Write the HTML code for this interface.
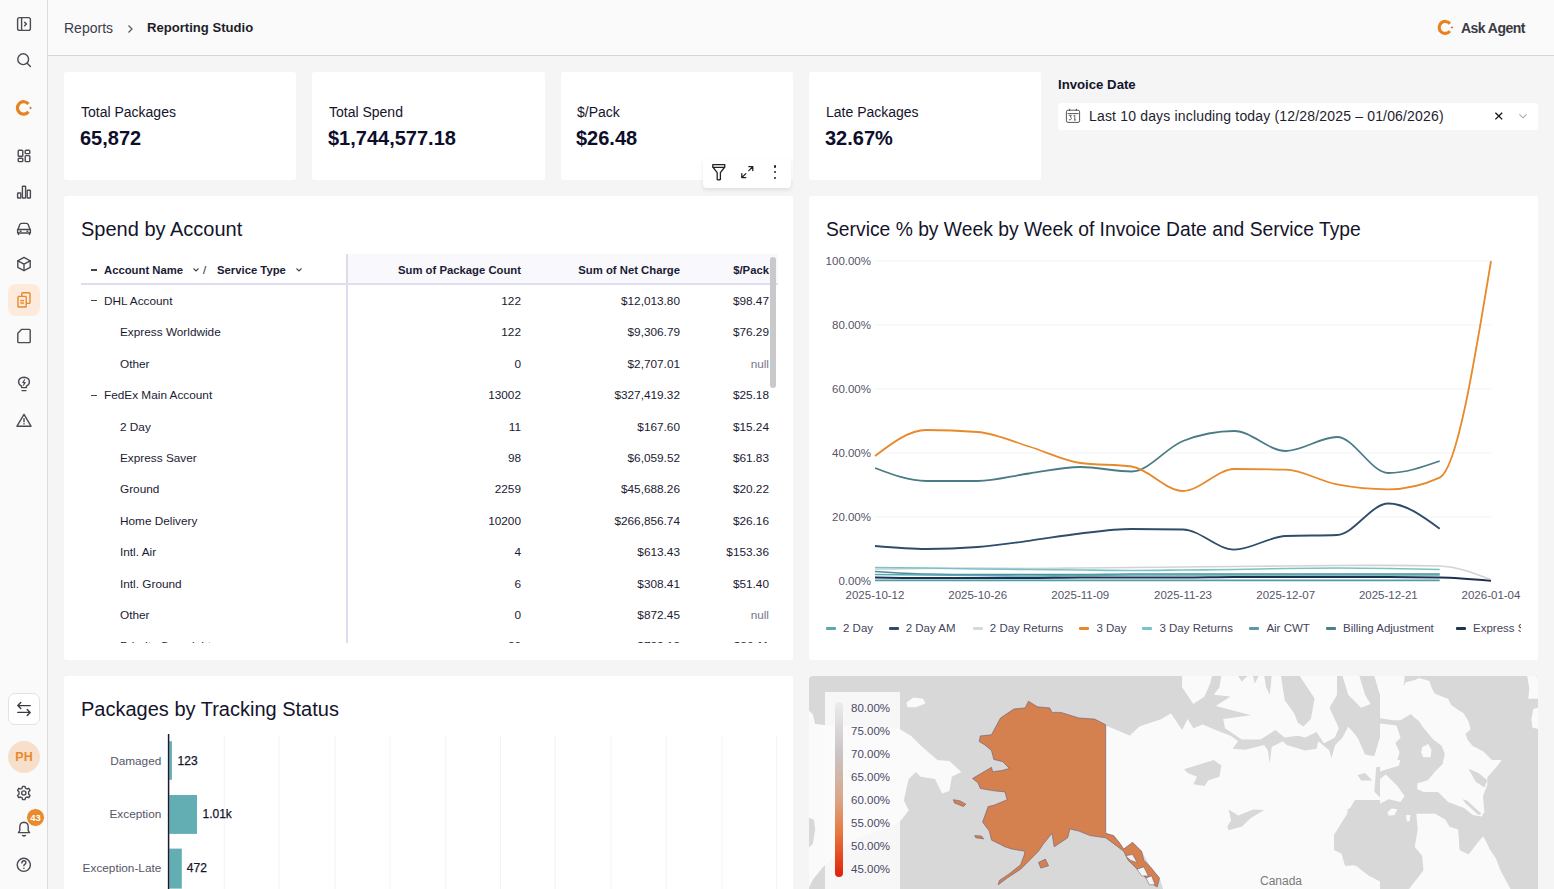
<!DOCTYPE html>
<html><head><meta charset="utf-8">
<style>
*{box-sizing:border-box;margin:0;padding:0}
html,body{width:1554px;height:889px;overflow:hidden;background:#f5f5f5;font-family:"Liberation Sans",sans-serif;color:#14142b}
.abs{position:absolute}
#side{position:absolute;left:0;top:0;width:48px;height:889px;background:#fafafa;border-right:1px solid #dcdcdc}
#hdr{position:absolute;left:48px;top:0;width:1506px;height:56px;background:#fafafa;border-bottom:1px solid #d6d6d6}
.card{position:absolute;background:#fff;border-radius:3px}
.kl{position:absolute;font-size:14px;color:#14142b;white-space:nowrap}
.kv{position:absolute;font-size:20px;font-weight:bold;color:#0e0e2c;white-space:nowrap}
.t20{position:absolute;font-size:20px;color:#14142b;white-space:nowrap}
.tx{position:absolute;white-space:nowrap}
.r{text-align:right}
svg{position:absolute;overflow:visible}
.tr{position:absolute;font-size:11.8px;line-height:16px;color:#1b1b33;white-space:nowrap}
.th{position:absolute;font-size:11.3px;line-height:16px;font-weight:bold;color:#1b1b33;white-space:nowrap}
.nul{color:#77778a}
.bl{position:absolute;font-size:11.8px;line-height:16px;color:#55556a;white-space:nowrap}
.bv{position:absolute;font-size:12px;line-height:16px;color:#14142b;white-space:nowrap;-webkit-text-stroke:0.25px #14142b}
.ml{position:absolute;font-size:11.5px;line-height:16px;color:#4a4a66;white-space:nowrap}

.ax{position:absolute;font-size:11.5px;line-height:16px;color:#55556a;white-space:nowrap}
.lg{position:absolute;font-size:11.5px;line-height:16px;color:#44445a;white-space:nowrap}

.mn{position:absolute;width:6px;height:1.3px;background:#444}

</style></head><body>
<div id="side"></div>
<div id="hdr"></div>
<!-- sidebar icons -->
<svg style="left:0;top:0" width="48" height="889" viewBox="0 0 48 889" fill="none" stroke="#4a4a52" stroke-width="1.4" stroke-linecap="round" stroke-linejoin="round">
 <!-- panel toggle -->
 <rect x="17.6" y="17.6" width="12.8" height="12.8" rx="2"/>
 <line x1="21.6" y1="17.6" x2="21.6" y2="30.4"/>
 <path d="M24.6 22.2 L26.4 24 L24.6 25.8"/>
 <!-- search -->
 <circle cx="23.2" cy="59.2" r="5.4"/>
 <line x1="27.2" y1="63.2" x2="30.4" y2="66.4"/>
 <!-- grid -->
 <rect x="18.2" y="150.2" width="4.6" height="6" rx="0.8"/>
 <rect x="25.2" y="150.2" width="4.6" height="3.4" rx="0.8"/>
 <rect x="18.2" y="158.2" width="4.6" height="3.4" rx="0.8"/>
 <rect x="25.2" y="155.6" width="4.6" height="6" rx="0.8"/>
 <!-- bar chart -->
 <rect x="17.6" y="193" width="3.2" height="5" rx="0.5"/>
 <rect x="22.4" y="186.2" width="3.2" height="11.8" rx="0.5"/>
 <rect x="27.2" y="190.2" width="3.2" height="7.8" rx="0.5"/>
 <!-- car -->
 <path d="M18 229.5 L19.8 224.6 Q20.2 223.4 21.4 223.4 L26.6 223.4 Q27.8 223.4 28.2 224.6 L30 229.5"/>
 <path d="M17.6 229.5 L30.4 229.5 L30.4 233 L17.6 233 Z"/>
 <line x1="18.6" y1="233" x2="18.6" y2="234.6"/>
 <line x1="29.4" y1="233" x2="29.4" y2="234.6"/>
 <line x1="20.2" y1="231.3" x2="21" y2="231.3"/>
 <line x1="27" y1="231.3" x2="27.8" y2="231.3"/>
 <!-- cube -->
 <path d="M24 257.4 L30.2 260.8 L30.2 267.4 L24 270.6 L17.8 267.4 L17.8 260.8 Z"/>
 <path d="M17.8 260.8 L24 264.2 L30.2 260.8 M24 264.2 L24 270.6"/>
 <!-- page -->
 <path d="M21.5 329.4 L29.4 329.4 Q30.2 329.4 30.2 330.2 L30.2 341.8 Q30.2 342.6 29.4 342.6 L18.6 342.6 Q17.8 342.6 17.8 341.8 L17.8 333.2 Z"/>
 <!-- bulb -->
 <path d="M21.6 387.6 L21.6 386.2 Q18.4 384.4 18.6 381.6 Q18.8 377.4 24 377.2 Q29.2 377.4 29.4 381.6 Q29.6 384.4 26.4 386.2 L26.4 387.6 Z"/>
 <line x1="22" y1="390.6" x2="26" y2="390.6"/>
 <path d="M24.6 379.8 L22.8 382.6 L25.2 382.6 L23.4 385.2" stroke-width="1.1"/>
 <!-- warning -->
 <path d="M24 414.4 L31 426.2 L17 426.2 Z"/>
 <line x1="24" y1="418.8" x2="24" y2="421.8"/>
 <line x1="24" y1="423.8" x2="24" y2="424"/>
 <!-- gear -->
 <circle cx="23.8" cy="793" r="2.1"/>
 <path d="M22.6 786.4 L25 786.4 L25.5 788.2 L27 789 L28.8 788.3 L30 790.4 L28.6 791.7 L28.6 794.3 L30 795.6 L28.8 797.7 L27 797 L25.5 797.8 L25 799.6 L22.6 799.6 L22.1 797.8 L20.6 797 L18.8 797.7 L17.6 795.6 L19 794.3 L19 791.7 L17.6 790.4 L18.8 788.3 L20.6 789 L22.1 788.2 Z"/>
 <!-- bell -->
 <path d="M18.4 832.6 L19.8 830.6 L19.8 827 Q19.8 822.4 24 822.2 Q28.2 822.4 28.2 827 L28.2 830.6 L29.6 832.6 Z"/>
 <path d="M22.6 835.4 Q24 836.6 25.4 835.4"/>
 <!-- help -->
 <circle cx="23.8" cy="864.8" r="6.6"/>
 <path d="M21.9 863 Q21.9 860.7 23.9 860.7 Q25.9 860.7 25.9 862.6 Q25.9 863.8 24.7 864.4 Q23.9 864.8 23.9 865.8"/>
 <line x1="23.9" y1="868.2" x2="23.9" y2="868.4"/>
</svg>
<!-- C logo -->
<svg style="left:1px;top:0" width="48" height="130" viewBox="0 0 48 130"><path d="M27.49 104.08 A6.2 6.2 0 1 0 27.49 111.72" fill="none" stroke="#e8821f" stroke-width="3.2"/><path d="M29.60 106.20 Q29.60 107.90 31.30 107.90 Q29.60 107.90 29.60 109.60 Q29.60 107.90 27.90 107.90 Q29.60 107.90 29.60 106.20 Z" fill="#b0652a"/></svg>
<!-- active docs -->
<div style="position:absolute;left:8px;top:284px;width:32px;height:32px;border-radius:8px;background:#fcebdd"></div>
<svg style="left:0;top:0" width="48" height="889" viewBox="0 0 48 889" fill="none" stroke="#e8892b" stroke-width="1.4" stroke-linejoin="round">
 <rect x="21.8" y="292.8" width="8.2" height="10.6" rx="0.8"/>
 <rect x="18" y="296.4" width="8.2" height="10.6" rx="0.8" fill="#fcebdd"/>
 <line x1="20.2" y1="300.6" x2="24" y2="300.6"/>
 <line x1="20.2" y1="303" x2="24" y2="303"/>
</svg>
<!-- swap button -->
<div style="position:absolute;left:8px;top:693px;width:32px;height:32px;border-radius:7px;background:#fff;border:1px solid #e2e2e2"></div>
<svg style="left:0;top:0" width="48" height="889" viewBox="0 0 48 889" fill="none" stroke="#3a3a44" stroke-width="1.4" stroke-linecap="round" stroke-linejoin="round">
 <path d="M30.2 705.6 L17.8 705.6 M20.8 702.6 L17.8 705.6 L20.8 708.6"/>
 <path d="M17.8 712.4 L30.2 712.4 M27.2 709.4 L30.2 712.4 L27.2 715.4"/>
</svg>
<!-- avatar -->
<div style="position:absolute;left:8px;top:741px;width:32px;height:32px;border-radius:50%;background:#f8dfcc;color:#e8892b;font-size:12.5px;font-weight:bold;line-height:32px;text-align:center">PH</div>
<!-- badge -->
<div style="position:absolute;left:27.5px;top:809px;width:17px;height:17px;border-radius:50%;background:#ea8a2a;color:#fff;font-size:9.5px;font-weight:bold;line-height:17px;text-align:center;border:1.5px solid #fafafa;box-sizing:content-box;margin:-1.5px 0 0 -1.5px">43</div>


<!-- breadcrumb -->
<div class="tx" style="left:64px;top:20px;font-size:14px;color:#3c3c4a">Reports</div>
<svg style="left:126px;top:24px" width="8" height="10" viewBox="0 0 8 10"><path d="M2.5 1.5 L6 5 L2.5 8.5" fill="none" stroke="#555" stroke-width="1.2"/></svg>
<div class="tx" style="left:147px;top:20px;font-size:13.1px;font-weight:bold;color:#1f1f2a">Reporting Studio</div>

<!-- Ask agent -->
<div class="tx" style="left:1461px;top:20px;font-size:14px;letter-spacing:-0.55px;font-weight:bold;color:#3a3a44">Ask Agent</div>

<!-- KPI cards -->
<div class="card" style="left:64px;top:72px;width:232px;height:108px"></div>
<div class="card" style="left:312px;top:72px;width:233px;height:108px"></div>
<div class="card" style="left:561px;top:72px;width:232px;height:108px"></div>
<div class="card" style="left:809px;top:72px;width:232px;height:108px"></div>
<div class="kl" style="left:81px;top:104px">Total Packages</div>
<div class="kv" style="left:80px;top:127px">65,872</div>
<div class="kl" style="left:329px;top:104px">Total Spend</div>
<div class="kv" style="left:328px;top:127px">$1,744,577.18</div>
<div class="kl" style="left:577px;top:104px">$/Pack</div>
<div class="kv" style="left:576px;top:127px">$26.48</div>
<div class="kl" style="left:826px;top:104px">Late Packages</div>
<div class="kv" style="left:825px;top:127px">32.67%</div>

<!-- Invoice date filter -->
<div class="tx" style="left:1058px;top:77px;font-size:13.2px;font-weight:bold;color:#14142b">Invoice Date</div>
<div class="card" style="left:1058px;top:103px;width:480px;height:27px;border-radius:3px"></div>
<div class="tx" style="left:1089px;top:108px;font-size:14px;letter-spacing:0.17px;color:#1e1e2e">Last 10 days including today (12/28/2025 – 01/06/2026)</div>

<!-- ask agent icon -->
<svg style="left:0;top:0" width="1554" height="60" viewBox="0 0 1554 60"><path d="M1449.93 23.71 A6.0 6.0 0 1 0 1449.93 31.09" fill="none" stroke="#e8821f" stroke-width="3.1"/><path d="M1452.00 25.80 Q1452.00 27.40 1453.60 27.40 Q1452.00 27.40 1452.00 29.00 Q1452.00 27.40 1450.40 27.40 Q1452.00 27.40 1452.00 25.80 Z" fill="#b0652a"/></svg>
<!-- calendar icon -->
<svg style="left:0;top:0" width="1554" height="889" viewBox="0 0 1554 889" fill="none" stroke="#555" stroke-width="1">
 <rect x="1066.4" y="110.2" width="13.2" height="12.2" rx="1.6"/>
 <line x1="1067.6" y1="113.6" x2="1078.6" y2="113.6"/>
 <line x1="1069.6" y1="108.8" x2="1069.6" y2="111"/>
 <line x1="1076.4" y1="108.8" x2="1076.4" y2="111"/>
 <path d="M1068.8 115.4 L1071.4 115.4 L1070.2 117 Q1071.6 117.2 1071.4 118.6 Q1071 120.2 1068.8 119.8" stroke-width="0.9"/>
 <path d="M1073.4 115.8 L1074.8 115.2 L1074.8 120 M1073.8 120 L1076 120" stroke-width="0.9"/>
 <!-- x -->
 <path d="M1495.4 112.8 L1502.2 119.4 M1502.2 112.8 L1495.4 119.4" stroke="#111" stroke-width="1.3"/>
 <!-- chevron -->
 <path d="M1519.4 114.4 L1523 117.8 L1526.6 114.4" stroke="#a8a8b0" stroke-width="1.1"/>
</svg>
<!-- toolbar -->
<div style="position:absolute;left:703px;top:158.5px;width:88px;height:29.5px;background:#fff;border-radius:4px;box-shadow:0 2px 4px rgba(0,0,0,0.09)"></div>
<svg style="left:0;top:0" width="1554" height="889" viewBox="0 0 1554 889" fill="none" stroke="#222" stroke-width="1.3" stroke-linejoin="round" stroke-linecap="round">
 <path d="M712.8 164.6 L724.8 164.6 L724.8 167 L720.4 172.6 L720.4 179.4 Q718.8 180.4 717.2 179.4 L717.2 172.6 L712.8 167 Z"/>
 <line x1="713.2" y1="167.4" x2="724.4" y2="167.4"/>
 <path d="M741.8 177.6 L745.8 173.6 M748.8 170.6 L752.8 166.6 M748.8 166.6 L752.8 166.6 L752.8 170.6 M741.8 173.6 L741.8 177.6 L745.8 177.6"/>
</svg>
<div style="position:absolute;left:773.6px;top:165.4px;width:2.4px;height:2.4px;border-radius:50%;background:#222"></div>
<div style="position:absolute;left:773.6px;top:171px;width:2.4px;height:2.4px;border-radius:50%;background:#222"></div>
<div style="position:absolute;left:773.6px;top:176.6px;width:2.4px;height:2.4px;border-radius:50%;background:#222"></div>

<!-- panels -->
<div class="card" style="left:64px;top:196px;width:729px;height:464px"></div>
<div class="card" style="left:809px;top:196px;width:729px;height:464px"></div>
<div class="card" style="left:64px;top:676px;width:729px;height:240px"></div>
<div style="position:absolute;left:809px;top:676px;width:729px;height:213px;overflow:hidden;border-radius:4px 4px 0 0"><svg style="left:-809px;top:-676px" width="1554" height="889" viewBox="0 0 1554 889">
<rect x="809" y="676" width="729" height="213" fill="#d8d8d8"/>
<polygon points="808.0,709.6 812.8,714.4 815.2,723.9 824.8,725.1 855.9,726.3 879.9,727.5 899.1,728.7 911.1,735.9 920.7,745.5 937.4,759.9 949.4,761.1 961.4,771.9 951.8,776.7 949.4,791.1 942.2,793.4 935.0,779.1 920.7,776.7 915.9,771.9 908.7,779.1 906.3,788.7 903.9,800.6 908.7,810.2 901.5,819.8 887.1,829.4 875.1,831.8 855.9,839.0 844.0,848.6 832.0,858.2 822.4,867.8 812.8,879.7 808.0,889.1 805.6,889.1 805.6,709.6" fill="#fafafa"/>
<polygon points="906.3,702.4 913.5,697.6 923.1,698.8 925.4,703.6 915.9,707.2 907.5,707.2" fill="#fafafa"/>
<polygon points="808.0,817.4 814.0,819.8 815.2,829.4 812.8,843.8 808.0,848.6" fill="#d8d8d8"/>
<polygon points="1105.7,833.3 1105.7,724.7 1116.9,729.2 1130.4,732.6 1137.1,729.2 1146.0,728.1 1159.5,719.1 1170.0,712.4 1160.0,722.2 1169.0,713.2 1175.4,723.4 1183.1,729.8 1186.9,718.3 1187.6,728.6 1193.3,726.0 1201.0,724.7 1213.8,729.8 1220.3,733.7 1231.8,736.3 1239.5,738.8 1233.1,747.8 1236.9,751.6 1247.2,751.6 1260.0,749.1 1265.1,751.6 1269.0,764.5 1270.3,755.5 1269.0,747.8 1275.4,738.8 1283.1,736.3 1288.2,746.5 1301.0,751.6 1313.8,750.4 1316.4,747.8 1324.1,742.7 1329.2,758.1 1331.8,747.8 1339.5,738.8 1350.0,727.3 1350,700 1545,700 1545,900 1164.0,891.6 1159.5,878.1 1150.5,866.9 1141.6,851.3 1132.6,842.3 1123.7,849.0 1119.2,842.3 1113.6,835.6" fill="#fafafa"/>
<polygon points="1181.2,688.2 1183.1,682.4 1186.9,676.0 1220.3,676.0 1216.4,677.3 1209.4,686.3 1207.4,696.5 1201.0,698.4 1194.0,703.6 1185.6,692.7" fill="#fafafa"/>
<polygon points="1215.1,691.4 1216.4,682.4 1220.3,676.0 1236.9,676.0 1238.2,679.8 1242.1,679.8 1243.3,676.0 1252.3,676.0 1254.9,683.7 1258.7,682.4 1260.0,676.0 1265.1,676.0 1269.0,693.9 1271.5,693.9 1271.5,676.0 1281.8,676.0 1283.1,695.2 1285.6,704.2 1293.3,711.9 1301.0,715.7 1303.6,720.9 1295.9,735.0 1283.1,735.0 1275.4,728.6 1269.0,735.0 1252.3,740.1 1242.1,740.1 1239.5,732.4 1229.2,729.8 1224.1,723.4 1226.7,718.3 1249.7,714.5 1236.9,710.0 1218.3,708.1 1219.0,703.6 1230.5,697.8 1220.3,697.2" fill="#fafafa"/>
<polygon points="1294.6,676.0 1301.0,683.7 1311.3,692.7 1313.8,699.1 1324.1,699.1 1325.4,676.0" fill="#fafafa"/>
<polygon points="1311.3,733.7 1319.0,723.4 1327.9,727.3 1326.7,740.1 1321.5,745.2 1316.4,742.7" fill="#fafafa"/>
<polygon points="1330.5,676.0 1339.5,676.0 1336.9,692.7 1344.6,701.6 1345.9,714.5 1350.0,717.0 1350.0,727.3 1339.5,727.3 1329.2,726.0 1326.7,719.6 1325.4,701.6 1330.5,695.2" fill="#fafafa"/>
<polygon points="1346.2,676.0 1359.0,676.0 1359.0,699.1 1361.5,706.8 1364.1,711.9 1375.6,717.0 1383.3,719.6 1380.8,733.7 1375.6,747.8 1370.5,758.1 1366.7,747.8 1364.1,733.7 1357.7,729.8 1355.1,742.7 1352.6,727.3 1346.2,726.0" fill="#d8d8d8"/>
<polygon points="1430.8,682.4 1434.6,692.7 1439.7,696.5 1448.7,699.1 1451.3,705.5 1461.5,711.9 1465.4,719.6 1470.5,729.8 1465.4,737.5 1470.5,741.4 1478.2,747.8 1485.9,752.9 1491.0,760.6 1498.7,765.7 1487.2,785.0 1491.0,790.0 1567.9,790.0 1567.9,669.6 1426.9,669.6" fill="#d8d8d8"/>
<polygon points="1359.0,676.0 1374.4,676.0 1379.5,697.8 1382.1,676.0 1403.8,676.0 1403.8,688.8 1415.4,679.8 1420.5,678.6 1430.8,682.4 1434.6,692.7 1439.7,696.5 1448.7,699.1 1451.3,705.5 1461.5,711.9 1465.4,719.6 1470.5,729.8 1465.4,737.5 1470.5,741.4 1478.2,747.8 1485.9,752.9 1491.0,760.6 1498.7,765.7 1487.2,785.0 1478.2,779.8 1465.4,767.0 1447.4,758.1 1442.3,742.7 1432.1,736.3 1421.8,724.7 1417.9,717.0 1409.0,713.2 1392.3,722.2 1383.3,719.6 1375.6,717.0 1364.1,711.9 1361.5,706.8 1370.5,705.5 1366.7,701.6 1359.0,699.1" fill="#fafafa"/>
<polygon points="1534.6,676.0 1540.0,676.0 1540.0,691.4 1535.9,692.7 1533.3,683.7" fill="#fafafa"/>
<polygon points="1537.2,709.3 1540.0,708.1 1540.0,727.3 1535.9,724.7 1534.6,717.0" fill="#fafafa"/>
<polygon points="1392.3,724.7 1409.0,713.2 1417.9,717.0 1421.8,724.7 1432.1,736.3 1442.3,742.7 1444.9,758.1 1438.5,778.6 1421.8,782.4 1416.7,790.0 1387.2,790.0 1387.2,765.7 1398.7,758.1 1396.2,742.7" fill="#d8d8d8"/>
<polygon points="1421.2,747.8 1425.6,743.9 1430.8,746.5 1430.1,756.8 1424.4,758.1 1421.2,754.2" fill="#fafafa"/>
<polygon points="1450.0,759.3 1460.3,767.0 1456.4,773.4 1451.3,776.0" fill="#d8d8d8"/>
<polygon points="1465.4,773.4 1469.2,768.3 1478.2,773.4 1485.9,790.0 1471.8,790.0" fill="#d8d8d8"/>
<polygon points="1350.0,808.2 1353.7,802.1 1357.4,795.9 1367.2,795.9 1372.1,784.9 1375.7,780.0 1378.2,780.0 1380.6,804.5 1386.8,809.4 1405.1,810.6 1417.4,814.3 1417.4,829.0 1419.9,838.8 1415.0,848.6 1416.2,853.5 1423.5,863.3 1423.5,875.6 1408.8,888.9 1395.3,888.9 1380.6,881.7 1368.4,875.6 1356.1,865.8 1347.5,864.6 1347.5,809.4" fill="#d8d8d8"/>
<polygon points="1405.1,780.0 1416.2,780.0 1418.6,792.3 1435.8,791.0 1448.0,794.7 1460.3,798.4 1472.5,804.5 1479.9,816.8 1483.6,835.1 1478.7,845.0 1472.5,852.3 1466.4,853.5 1457.8,848.6 1457.8,829.0 1448.0,824.1 1438.2,814.3 1430.9,815.5 1417.4,814.3 1405.1,810.6" fill="#d8d8d8"/>
<polygon points="1487.3,767.7 1541.2,767.7 1541.2,888.9 1515.4,888.9 1498.3,865.8 1483.6,835.1 1487.3,780.0" fill="#d8d8d8"/>
<polygon points="1228.6,809.4 1238.4,815.5 1253.1,809.4 1264.2,810.0 1250.7,818.0 1242.1,826.6 1228.6,830.2 1227.4,826.6 1231.1,820.4" fill="#d8d8d8"/>
<polygon points="1350.0,809.4 1341.4,822.9 1334.0,835.1 1334.0,849.9 1341.4,853.5 1345.0,865.8 1351.2,865.8" fill="#d8d8d8"/>
<polygon points="1184.4,769.6 1210.0,760.6 1213.8,763.2 1198.5,770.9 1220.3,765.7 1221.5,776.0 1216.4,778.6 1211.3,778.6 1202.3,786.3 1193.3,782.4 1198.5,774.7 1185.6,773.4" fill="#d8d8d8"/>
<rect x="1105.6" y="676" width="274.4" height="124" fill="#fafafa"/>
<polygon points="1100.0,676.0 1182.1,676.0 1182.1,687.2 1193.3,704.0 1204.5,696.5 1210.1,683.5 1212.0,676.0 1221.3,676.0 1219.4,687.2 1213.8,694.7 1230.6,696.5 1215.7,705.9 1251.1,715.2 1223.2,718.9 1225.0,728.2 1241.8,739.4 1260.5,739.4 1275.4,730.1 1284.7,737.6 1297.8,735.7 1305.3,737.6 1316.5,732.0 1323.9,743.2 1335.1,737.6 1338.9,728.2 1331.4,758.1 1329.5,750.6 1318.3,741.3 1316.5,748.8 1305.3,750.6 1286.6,745.0 1282.9,741.3 1271.7,746.9 1269.8,763.7 1267.9,750.6 1264.2,745.0 1245.5,749.7 1232.5,748.8 1238.1,741.3 1230.6,735.7 1215.7,730.1 1202.6,724.5 1193.3,728.2 1187.7,718.9 1182.1,730.1 1170.9,713.3 1161.6,718.9 1139.2,726.4 1129.9,735.7 1116.8,730.1 1105.6,725.4 1100.0,720.8" fill="#d8d8d8"/>
<polygon points="1281.0,676.0 1299.7,676.0 1314.6,698.4 1310.9,718.9 1303.4,726.4 1297.8,722.7 1294.1,713.3 1284.7,700.3" fill="#d8d8d8"/>
<polygon points="1337.0,676.0 1342.6,676.0 1348.2,694.7 1361.2,707.7 1370.6,704.0 1365.0,694.7 1359.4,676.0 1374.3,676.0 1379.9,694.7 1390.0,720.8 1379.9,737.6 1374.3,756.2 1365.0,754.4 1357.5,737.6 1348.2,726.4 1342.6,737.6 1335.1,745.0 1331.4,758.1 1329.5,750.6 1338.9,728.2 1329.5,707.7 1337.0,694.7" fill="#d8d8d8"/>
<polygon points="1264.2,676.0 1271.7,676.0 1269.8,694.7 1266.1,687.2" fill="#d8d8d8"/>
<polygon points="1238.1,676.0 1247.4,676.0 1241.8,681.6" fill="#d8d8d8"/>
<polygon points="1253.0,676.0 1258.6,676.0 1254.9,683.5" fill="#d8d8d8"/>
<polygon points="1184.0,769.3 1213.8,760.0 1221.3,765.6 1219.4,776.8 1208.2,780.5 1204.5,786.1 1193.3,784.2 1197.0,776.8 1187.7,773.0" fill="#d8d8d8"/>
<polygon points="1357.5,774.9 1365.0,773.0 1372.4,780.5 1361.2,780.5" fill="#d8d8d8"/>
<polygon points="1376.2,767.4 1383.6,765.6 1390.0,773.0 1390.0,788.0 1379.9,797.3 1374.3,791.7" fill="#d8d8d8"/>
<rect x="1380" y="676" width="160" height="87" fill="#d8d8d8"/>
<polygon points="1380.0,676.0 1404.7,676.0 1403.7,686.3 1405.7,682.2 1415.0,680.1 1419.1,678.1 1429.4,681.1 1431.5,687.3 1434.6,693.5 1441.8,696.6 1448.0,698.7 1451.0,704.8 1458.2,710.0 1463.4,713.1 1468.5,721.3 1470.6,729.5 1465.5,733.7 1467.5,739.8 1472.7,746.0 1483.0,751.2 1489.1,757.3 1498.4,766.6 1441.8,766.6 1444.9,754.2 1441.8,746.0 1433.5,739.8 1428.4,733.7 1423.2,727.5 1419.1,721.3 1414.0,717.2 1410.9,714.1 1400.6,720.3 1393.4,720.3 1380.0,718.2" fill="#fafafa"/>
<polygon points="1380.0,723.4 1396.5,725.4 1400.6,737.8 1395.4,742.9 1399.6,752.2 1395.4,766.6 1380.0,766.6" fill="#fafafa"/>
<polygon points="1422.2,747.0 1428.4,744.0 1431.5,750.1 1430.5,757.3 1423.2,757.3 1421.2,752.2" fill="#fafafa"/>
<polygon points="1527.2,676.0 1540.0,676.0 1540.0,698.7 1528.3,698.7 1529.3,688.4" fill="#fafafa"/>
<polygon points="1533.4,708.9 1540.0,706.9 1540.0,729.5 1532.4,727.5 1531.4,719.2" fill="#fafafa"/>
<rect x="1380" y="763" width="160" height="130" fill="#d8d8d8"/>
<polygon points="1380.0,760.0 1400.3,760.0 1398.9,765.8 1388.7,768.7 1380.0,771.6" fill="#fafafa"/>
<polygon points="1380.0,778.9 1385.8,774.5 1397.4,786.1 1404.7,796.3 1400.3,802.1 1388.7,799.2 1380.0,803.5" fill="#fafafa"/>
<polygon points="1435.1,771.6 1446.7,760.0 1501.8,760.0 1497.5,765.8 1487.3,777.4 1487.3,784.7 1483.0,796.3 1484.4,812.2 1481.5,816.6 1472.8,815.1 1464.1,807.9 1448.2,802.1 1438.0,791.9 1423.5,791.9 1417.0,789.0 1417.7,783.2 1427.9,780.3" fill="#fafafa"/>
<polygon points="1416.3,813.7 1435.1,813.7 1445.3,819.5 1449.6,826.7 1458.3,829.6 1459.8,849.9 1468.5,854.3 1478.6,841.2 1483.0,835.4 1490.2,849.9 1496.0,858.6 1500.4,870.2 1510.5,889.0 1409.0,889.0 1423.5,870.2 1422.1,855.7 1414.8,847.0 1417.7,829.6" fill="#fafafa"/>
<polygon points="1387.3,812.2 1391.6,808.6 1397.4,809.3 1394.5,815.1 1388.7,815.8" fill="#fafafa"/>
<polygon points="1406.1,815.1 1410.5,815.1 1409.7,820.9 1406.8,821.6" fill="#fafafa"/>
<polygon points="1468.5,768.7 1478.6,773.1 1487.3,780.3 1484.4,787.6 1475.7,781.8" fill="#d8d8d8"/>
<polygon points="1462.7,799.2 1467.0,800.6 1481.5,813.7 1478.6,815.1 1465.6,803.5" fill="#d8d8d8"/>
<polygon points="1458.3,829.6 1467.0,823.8 1481.5,828.2 1484.4,835.4 1478.6,841.2 1468.5,854.3 1459.8,849.9" fill="#d8d8d8"/>
<polygon points="1028.5,701.2 1037.4,706.8 1049.7,707.9 1052.0,712.4 1060.9,712.4 1078.9,718.0 1094.5,719.1 1105.7,724.7 1105.7,833.3 1113.6,835.6 1119.2,842.3 1123.7,849.0 1132.6,842.3 1141.6,851.3 1143.8,860.2 1150.5,866.9 1159.5,878.1 1157.2,887.1 1150.5,882.6 1141.6,873.7 1134.8,866.9 1128.1,860.2 1123.7,851.3 1114.7,844.5 1105.7,837.8 1090.1,835.6 1078.9,831.1 1069.9,828.9 1067.7,837.8 1054.2,846.8 1052.0,833.3 1043.0,844.5 1038.5,851.3 1029.6,860.2 1020.6,869.2 1007.2,878.1 998.2,884.8 999.4,880.4 1009.4,873.7 1020.6,864.7 1024.0,855.7 1025.1,851.3 1011.7,849.0 1004.9,846.8 1000.5,844.5 991.5,840.1 989.3,831.1 982.6,822.1 988.2,806.5 993.8,805.3 1007.2,799.7 1004.9,791.9 993.8,790.8 980.3,788.5 978.1,782.9 972.5,778.5 991.5,767.3 992.6,771.7 1001.6,770.6 1009.4,768.4 1002.7,761.7 993.8,759.4 991.5,750.5 984.8,744.9 979.2,741.5 980.3,735.9 991.5,734.8 1000.5,718.0 1013.9,709.0 1025.1,707.9" fill="#d4804f" stroke="#6a5a78" stroke-width="0.6"/>
<polygon points="953.4,799.7 960.2,800.9 965.8,804.2 963.5,806.5 954.6,803.1" fill="#d4804f" stroke="#6a5a78" stroke-width="0.6"/>
<polygon points="974.7,835.6 981.4,836.0 983.7,838.9 975.8,837.8" fill="#d4804f" stroke="#6a5a78" stroke-width="0.6"/>
<polygon points="1038.5,862.5 1045.3,859.1 1048.6,865.8 1040.8,868.1" fill="#d4804f" stroke="#6a5a78" stroke-width="0.6"/>
<polygon points="1125.9,855.7 1132.6,854.6 1137.1,862.5 1130.4,860.2" fill="#f4f4f4" stroke="#6a5a78" stroke-width="0.5"/>
<polygon points="1137.1,869.2 1143.8,866.9 1148.3,875.9 1141.6,875.9" fill="#f4f4f4" stroke="#6a5a78" stroke-width="0.5"/>
<polygon points="1146.0,878.1 1151.6,875.9 1155.0,884.8 1149.4,884.8" fill="#f4f4f4" stroke="#6a5a78" stroke-width="0.5"/>
</svg></div>

<div class="t20" style="left:81px;top:218px">Spend by Account</div>
<div id="tbl" style="position:absolute;left:64px;top:254px;width:729px;height:389px;overflow:hidden">
<div style="position:absolute;left:284px;top:0;width:430px;height:30px;background:#f9f9fd"></div>
<div style="position:absolute;left:17px;top:29px;width:697px;height:2px;background:#dedef0"></div>
<div style="position:absolute;left:282px;top:0;width:2px;height:400px;background:#dcdcec"></div>
<div class="mn" style="left:27px;top:15.4px"></div>
<div class="th" style="left:40px;top:8px">Account Name</div>
<svg style="left:128px;top:13px" width="8" height="6" viewBox="0 0 8 6"><path d="M1.5 1.5 L4 4 L6.5 1.5" fill="none" stroke="#444" stroke-width="1.1"/></svg>
<div class="th" style="left:139px;top:8px;font-weight:normal">/</div>
<div class="th" style="left:153px;top:8px">Service Type</div>
<svg style="left:231px;top:13px" width="8" height="6" viewBox="0 0 8 6"><path d="M1.5 1.5 L4 4 L6.5 1.5" fill="none" stroke="#444" stroke-width="1.1"/></svg>
<div class="th r" style="right:272px;top:8px">Sum of Package Count</div>
<div class="th r" style="right:113px;top:8px">Sum of Net Charge</div>
<div class="th r" style="right:24px;top:8px">$/Pack</div>
<div class="mn" style="left:27px;top:46.2px"></div><div class="tr" style="left:40px;top:38.8px">DHL Account</div><div class="tr r" style="right:272px;top:38.8px">122</div><div class="tr r" style="right:113px;top:38.8px">$12,013.80</div><div class="tr r" style="right:24px;top:38.8px">$98.47</div>
<div class="tr" style="left:56px;top:70.2px">Express Worldwide</div><div class="tr r" style="right:272px;top:70.2px">122</div><div class="tr r" style="right:113px;top:70.2px">$9,306.79</div><div class="tr r" style="right:24px;top:70.2px">$76.29</div>
<div class="tr" style="left:56px;top:101.6px">Other</div><div class="tr r" style="right:272px;top:101.6px">0</div><div class="tr r" style="right:113px;top:101.6px">$2,707.01</div><div class="tr r nul" style="right:24px;top:101.6px">null</div>
<div class="mn" style="left:27px;top:140.5px"></div><div class="tr" style="left:40px;top:133.1px">FedEx Main Account</div><div class="tr r" style="right:272px;top:133.1px">13002</div><div class="tr r" style="right:113px;top:133.1px">$327,419.32</div><div class="tr r" style="right:24px;top:133.1px">$25.18</div>
<div class="tr" style="left:56px;top:164.5px">2 Day</div><div class="tr r" style="right:272px;top:164.5px">11</div><div class="tr r" style="right:113px;top:164.5px">$167.60</div><div class="tr r" style="right:24px;top:164.5px">$15.24</div>
<div class="tr" style="left:56px;top:195.9px">Express Saver</div><div class="tr r" style="right:272px;top:195.9px">98</div><div class="tr r" style="right:113px;top:195.9px">$6,059.52</div><div class="tr r" style="right:24px;top:195.9px">$61.83</div>
<div class="tr" style="left:56px;top:227.3px">Ground</div><div class="tr r" style="right:272px;top:227.3px">2259</div><div class="tr r" style="right:113px;top:227.3px">$45,688.26</div><div class="tr r" style="right:24px;top:227.3px">$20.22</div>
<div class="tr" style="left:56px;top:258.7px">Home Delivery</div><div class="tr r" style="right:272px;top:258.7px">10200</div><div class="tr r" style="right:113px;top:258.7px">$266,856.74</div><div class="tr r" style="right:24px;top:258.7px">$26.16</div>
<div class="tr" style="left:56px;top:290.2px">Intl. Air</div><div class="tr r" style="right:272px;top:290.2px">4</div><div class="tr r" style="right:113px;top:290.2px">$613.43</div><div class="tr r" style="right:24px;top:290.2px">$153.36</div>
<div class="tr" style="left:56px;top:321.6px">Intl. Ground</div><div class="tr r" style="right:272px;top:321.6px">6</div><div class="tr r" style="right:113px;top:321.6px">$308.41</div><div class="tr r" style="right:24px;top:321.6px">$51.40</div>
<div class="tr" style="left:56px;top:353.0px">Other</div><div class="tr r" style="right:272px;top:353.0px">0</div><div class="tr r" style="right:113px;top:353.0px">$872.45</div><div class="tr r nul" style="right:24px;top:353.0px">null</div>
<div class="tr" style="left:56px;top:384.4px">Priority Overnight</div><div class="tr r" style="right:272px;top:384.4px">20</div><div class="tr r" style="right:113px;top:384.4px">$722.18</div><div class="tr r" style="right:24px;top:384.4px">$36.11</div>
<div style="position:absolute;left:706px;top:3px;width:6px;height:131px;border-radius:3px;background:#c9c9cc"></div>
</div>
<div class="t20" style="left:826px;top:218.5px;font-size:19.3px">Service % by Week by Week of Invoice Date and Service Type</div>
<div class="ax r" style="right:683px;top:253px">100.00%</div>
<div class="ax r" style="right:683px;top:317px">80.00%</div>
<div class="ax r" style="right:683px;top:381px">60.00%</div>
<div class="ax r" style="right:683px;top:445px">40.00%</div>
<div class="ax r" style="right:683px;top:509px">20.00%</div>
<div class="ax r" style="right:683px;top:573px">0.00%</div>
<div class="ax" style="left:835.0px;width:80px;text-align:center;top:587px">2025-10-12</div>
<div class="ax" style="left:937.7px;width:80px;text-align:center;top:587px">2025-10-26</div>
<div class="ax" style="left:1040.3px;width:80px;text-align:center;top:587px">2025-11-09</div>
<div class="ax" style="left:1143.0px;width:80px;text-align:center;top:587px">2025-11-23</div>
<div class="ax" style="left:1245.7px;width:80px;text-align:center;top:587px">2025-12-07</div>
<div class="ax" style="left:1348.3px;width:80px;text-align:center;top:587px">2025-12-21</div>
<div class="ax" style="left:1451.0px;width:80px;text-align:center;top:587px">2026-01-04</div>
<svg style="left:0;top:0" width="1554" height="889" viewBox="0 0 1554 889">
<line x1="875" y1="261" x2="1491" y2="261" stroke="#f3f3f6" stroke-width="1"/>
<line x1="875" y1="325" x2="1491" y2="325" stroke="#f3f3f6" stroke-width="1"/>
<line x1="875" y1="389" x2="1491" y2="389" stroke="#f3f3f6" stroke-width="1"/>
<line x1="875" y1="453" x2="1491" y2="453" stroke="#f3f3f6" stroke-width="1"/>
<line x1="875" y1="517" x2="1491" y2="517" stroke="#f3f3f6" stroke-width="1"/>
<path d="M875.0 569.3 C892.1 569.0 909.2 568.7 926.3 568.5 C943.4 568.3 960.6 568.0 977.7 568.0 C994.8 568.0 1011.9 568.5 1029.0 568.5 C1046.1 568.5 1063.2 568.2 1080.3 568.0 C1097.4 567.8 1114.6 567.7 1131.7 567.5 C1148.8 567.3 1165.9 567.2 1183.0 567.0 C1200.1 566.8 1217.2 566.7 1234.3 566.5 C1251.4 566.3 1268.6 566.2 1285.7 566.0 C1302.8 565.8 1319.9 565.6 1337.0 565.5 C1354.1 565.4 1371.2 565.4 1388.3 565.4 C1405.4 565.4 1422.6 565.6 1439.7 566.0 C1456.8 566.4 1473.9 573.1 1491.0 579.8" stroke="#d3d3d3" stroke-width="1.6" fill="none"/>
<path d="M875.0 567.5 C892.1 567.6 909.2 567.8 926.3 568.0 C943.4 568.2 960.6 568.8 977.7 569.0 C994.8 569.2 1011.9 569.3 1029.0 569.5 C1046.1 569.7 1063.2 569.8 1080.3 570.0 C1097.4 570.2 1114.6 570.5 1131.7 570.5 C1148.8 570.5 1165.9 570.2 1183.0 570.0 C1200.1 569.8 1217.2 569.8 1234.3 569.5 C1251.4 569.2 1268.6 568.8 1285.7 568.5 C1302.8 568.2 1319.9 568.0 1337.0 568.0 C1354.1 568.0 1371.2 568.2 1388.3 568.5 C1405.4 568.8 1422.6 569.1 1439.7 569.5" stroke="#79c3c8" stroke-width="1.6" fill="none"/>
<path d="M875.0 571.5 C892.1 572.6 909.2 573.7 926.3 574.0 C943.4 574.3 960.6 574.5 977.7 574.5 C994.8 574.5 1011.9 574.5 1029.0 574.5 C1046.1 574.5 1063.2 574.5 1080.3 574.5 C1097.4 574.5 1114.6 574.0 1131.7 574.0 C1148.8 574.0 1165.9 574.0 1183.0 574.0 C1200.1 574.0 1217.2 574.0 1234.3 574.0 C1251.4 574.0 1268.6 574.0 1285.7 574.0 C1302.8 574.0 1319.9 574.0 1337.0 574.0 C1354.1 574.0 1371.2 574.0 1388.3 574.0 C1405.4 574.0 1422.6 574.0 1439.7 574.0" stroke="#4a8f9c" stroke-width="1.6" fill="none"/>
<path d="M875.0 574.5 C892.1 574.7 909.2 574.8 926.3 575.0 C943.4 575.2 960.6 575.3 977.7 575.5 C994.8 575.7 1011.9 576.0 1029.0 576.0 C1046.1 576.0 1063.2 575.7 1080.3 575.5 C1097.4 575.3 1114.6 575.0 1131.7 575.0 C1148.8 575.0 1165.9 575.0 1183.0 575.0 C1200.1 575.0 1217.2 575.0 1234.3 575.0 C1251.4 575.0 1268.6 575.0 1285.7 575.0 C1302.8 575.0 1319.9 575.0 1337.0 575.0 C1354.1 575.0 1371.2 575.0 1388.3 575.0 C1405.4 575.0 1422.6 575.0 1439.7 575.0" stroke="#5aa8b0" stroke-width="1.6" fill="none"/>
<path d="M875.0 577.5 C892.1 577.8 909.2 578.0 926.3 578.0 C943.4 578.0 960.6 578.0 977.7 578.0 C994.8 578.0 1011.9 578.0 1029.0 578.0 C1046.1 578.0 1063.2 577.5 1080.3 577.5 C1097.4 577.5 1114.6 577.5 1131.7 577.5 C1148.8 577.5 1165.9 577.5 1183.0 577.5 C1200.1 577.5 1217.2 577.0 1234.3 577.0 C1251.4 577.0 1268.6 577.0 1285.7 577.0 C1302.8 577.0 1319.9 577.0 1337.0 577.0 C1354.1 577.0 1371.2 577.0 1388.3 577.0 C1405.4 577.0 1422.6 577.2 1439.7 577.5 C1456.8 577.8 1473.9 579.3 1491.0 580.8" stroke="#1c3050" stroke-width="1.8" fill="none"/>
<path d="M875.0 580.3 C892.1 580.3 909.2 580.3 926.3 580.3 C943.4 580.3 960.6 580.3 977.7 580.3 C994.8 580.3 1011.9 580.3 1029.0 580.3 C1046.1 580.3 1063.2 580.3 1080.3 580.3 C1097.4 580.3 1114.6 580.3 1131.7 580.3 C1148.8 580.3 1165.9 580.3 1183.0 580.3 C1200.1 580.3 1217.2 580.3 1234.3 580.3 C1251.4 580.3 1268.6 580.3 1285.7 580.3 C1302.8 580.3 1319.9 580.3 1337.0 580.3 C1354.1 580.3 1371.2 580.3 1388.3 580.3 C1405.4 580.3 1422.6 580.3 1439.7 580.3" stroke="#4c9cab" stroke-width="1.8" fill="none"/>
<path d="M875.0 546.0 C892.1 547.5 909.2 549.0 926.3 549.0 C943.4 549.0 960.6 548.3 977.7 547.0 C994.8 545.7 1011.9 543.0 1029.0 540.8 C1046.1 538.5 1063.2 535.5 1080.3 533.5 C1097.4 531.5 1114.6 529.0 1131.7 529.0 C1148.8 529.0 1165.9 529.2 1183.0 529.5 C1200.1 529.8 1217.2 549.6 1234.3 549.6 C1251.4 549.6 1268.6 536.7 1285.7 536.0 C1302.8 535.3 1319.9 535.7 1337.0 535.0 C1354.1 534.3 1371.2 503.5 1388.3 503.5 C1405.4 503.5 1422.6 516.1 1439.7 528.7" stroke="#2d4d6a" stroke-width="1.8" fill="none"/>
<path d="M875.0 468.0 C892.1 474.5 909.2 481.0 926.3 481.0 C943.4 481.0 960.6 481.0 977.7 481.0 C994.8 481.0 1011.9 475.8 1029.0 473.5 C1046.1 471.2 1063.2 467.0 1080.3 467.0 C1097.4 467.0 1114.6 471.5 1131.7 471.5 C1148.8 471.5 1165.9 447.7 1183.0 441.0 C1200.1 434.3 1217.2 431.0 1234.3 431.0 C1251.4 431.0 1268.6 451.0 1285.7 451.0 C1302.8 451.0 1319.9 437.0 1337.0 437.0 C1354.1 437.0 1371.2 473.0 1388.3 473.0 C1405.4 473.0 1422.6 467.0 1439.7 461.0" stroke="#4a7c86" stroke-width="1.8" fill="none"/>
<path d="M875.0 456.0 C892.1 443.0 909.2 430.0 926.3 430.0 C943.4 430.0 960.6 430.7 977.7 432.0 C994.8 433.3 1011.9 441.3 1029.0 446.5 C1046.1 451.7 1063.2 460.7 1080.3 463.0 C1097.4 465.3 1114.6 464.2 1131.7 466.5 C1148.8 468.8 1165.9 491.0 1183.0 491.0 C1200.1 491.0 1217.2 469.0 1234.3 469.0 C1251.4 469.0 1268.6 469.2 1285.7 469.7 C1302.8 470.2 1319.9 481.1 1337.0 484.4 C1354.1 487.7 1371.2 489.3 1388.3 489.3 C1405.4 489.3 1422.6 485.4 1439.7 477.6 C1456.8 469.8 1473.9 365.4 1491.0 261.0" stroke="#e8892b" stroke-width="1.8" fill="none"/>
</svg>
<div style="position:absolute;left:809px;top:615px;width:712px;height:26px;overflow:hidden"><div style="position:absolute;left:17.0px;top:11.5px;width:10px;height:3px;border-radius:1px;background:#5aa8b0"></div><div class="lg" style="left:34.0px;top:5px">2 Day</div><div style="position:absolute;left:80.0px;top:11.5px;width:10px;height:3px;border-radius:1px;background:#2d4d6a"></div><div class="lg" style="left:96.7px;top:5px">2 Day AM</div><div style="position:absolute;left:164.0px;top:11.5px;width:10px;height:3px;border-radius:1px;background:#d8d8d8"></div><div class="lg" style="left:180.8px;top:5px">2 Day Returns</div><div style="position:absolute;left:270.4px;top:11.5px;width:10px;height:3px;border-radius:1px;background:#e8892b"></div><div class="lg" style="left:287.4px;top:5px">3 Day</div><div style="position:absolute;left:333.0px;top:11.5px;width:10px;height:3px;border-radius:1px;background:#79c3c8"></div><div class="lg" style="left:350.4px;top:5px">3 Day Returns</div><div style="position:absolute;left:440.4px;top:11.5px;width:10px;height:3px;border-radius:1px;background:#5a9aa8"></div><div class="lg" style="left:457.4px;top:5px">Air CWT</div><div style="position:absolute;left:517.4px;top:11.5px;width:10px;height:3px;border-radius:1px;background:#4f7f8e"></div><div class="lg" style="left:534.0px;top:5px">Billing Adjustment</div><div style="position:absolute;left:647.0px;top:11.5px;width:10px;height:3px;border-radius:1px;background:#1f3554"></div><div class="lg" style="left:664.0px;top:5px">Express Saver</div></div>
<div class="t20" style="left:81px;top:698px">Packages by Tracking Status</div>

<svg style="left:0;top:0" width="1554" height="889" viewBox="0 0 1554 889"><line x1="224.3" y1="736" x2="224.3" y2="889" stroke="#f3f3f5" stroke-width="1"/><line x1="279" y1="736" x2="279" y2="889" stroke="#f3f3f5" stroke-width="1"/><line x1="335.2" y1="736" x2="335.2" y2="889" stroke="#f3f3f5" stroke-width="1"/><line x1="390" y1="736" x2="390" y2="889" stroke="#f3f3f5" stroke-width="1"/><line x1="445.7" y1="736" x2="445.7" y2="889" stroke="#f3f3f5" stroke-width="1"/><line x1="500.5" y1="736" x2="500.5" y2="889" stroke="#f3f3f5" stroke-width="1"/><line x1="555.2" y1="736" x2="555.2" y2="889" stroke="#f3f3f5" stroke-width="1"/><line x1="611" y1="736" x2="611" y2="889" stroke="#f3f3f5" stroke-width="1"/><line x1="666.2" y1="736" x2="666.2" y2="889" stroke="#f3f3f5" stroke-width="1"/><line x1="722" y1="736" x2="722" y2="889" stroke="#f3f3f5" stroke-width="1"/><line x1="776.7" y1="736" x2="776.7" y2="889" stroke="#f3f3f5" stroke-width="1"/><rect x="169.3" y="741.2" width="2.6" height="38.6" fill="#62aeb3"/><rect x="169.3" y="795" width="27.7" height="38.9" fill="#62aeb3"/><rect x="169.3" y="848.6" width="12.5" height="40" fill="#62aeb3"/><line x1="168.6" y1="734" x2="168.6" y2="889" stroke="#1a1a33" stroke-width="1.5"/></svg><div class="bl r" style="right:1392.7px;top:753px">Damaged</div><div class="bl r" style="right:1392.7px;top:806px">Exception</div><div class="bl r" style="right:1392.7px;top:860px">Exception-Late</div><div class="bv" style="left:177.6px;top:753px">123</div><div class="bv" style="left:202.5px;top:806px">1.01k</div><div class="bv" style="left:186.8px;top:860px">472</div>
<div style="position:absolute;left:825px;top:692px;width:75px;height:197px;background:rgba(250,250,250,0.88)"></div>
<div style="position:absolute;left:835px;top:702px;width:7.5px;height:175px;border-radius:4px;background:linear-gradient(to bottom,#ececec 0%,#c9c4c4 30%,#d9a78a 55%,#e8773e 75%,#e0200a 100%)"></div>
<div class="ml" style="left:851px;top:700.0px">80.00%</div><div class="ml" style="left:851px;top:723.0px">75.00%</div><div class="ml" style="left:851px;top:746.0px">70.00%</div><div class="ml" style="left:851px;top:769.0px">65.00%</div><div class="ml" style="left:851px;top:792.0px">60.00%</div><div class="ml" style="left:851px;top:815.0px">55.00%</div><div class="ml" style="left:851px;top:838.0px">50.00%</div><div class="ml" style="left:851px;top:861.0px">45.00%</div><div class="tx" style="left:1260px;top:873px;font-size:12px;line-height:16px;color:#7a7a7a">Canada</div>
</body></html>
